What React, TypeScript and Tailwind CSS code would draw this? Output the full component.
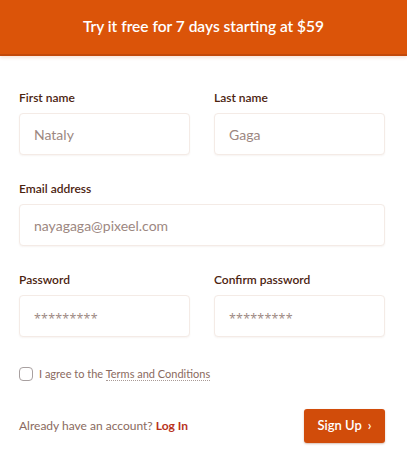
import React from "react";

function Field({ label, value, className = "", secret = false }: { label: string; value: string; className?: string; secret?: boolean }) {
  return (
    <div className={"flex flex-col " + className}>
      <label className="text-[12px] leading-[18px] font-semibold text-[#4b230f]">{label}</label>
      <div className="mt-[6px] h-[42px] rounded-[4px] border border-[#f4ebe6] bg-white shadow-[0_1px_2px_rgba(120,60,30,0.06)] flex items-center pl-[14px] text-[14px] text-[#9c8781]">
        {secret ? (
          <span className="text-[12.5px] translate-y-[3px] tracking-[0.2px]" style={{ fontFamily: '"Open Sans", sans-serif' }}>{value}</span>
        ) : (
          value
        )}
      </div>
    </div>
  );
}

export default function App() {
  return (
    <div className="w-[407px] h-[472px] bg-white" style={{ fontFamily: 'Lato, sans-serif' }}>
      <div className="h-[56px] bg-[#db5409] border-b-2 border-[#c2490a] shadow-[0_2px_3px_rgba(200,80,20,0.15)] flex items-center justify-center">
        <span className="text-white text-[15.5px] font-semibold">Try it free for 7 days starting at $59</span>
      </div>
      <div className="pl-[19px] pr-[22px] pt-[33px]">
        <div className="grid grid-cols-2 gap-x-[24px]">
          <Field label="First name" value="Nataly" />
          <Field label="Last name" value="Gaga" />
        </div>
        <Field label="Email address" value="nayagaga@pixeel.com" className="mt-[25px]" />
        <div className="grid grid-cols-2 gap-x-[24px] mt-[25px]">
          <Field label="Password" value="*********" secret />
          <Field label="Confirm password" value="*********" secret />
        </div>
        <div className="flex items-center mt-[29px] h-[16px]">
          <div className="w-[14px] h-[14px] rounded-[4px] border border-[#a8a0a0] bg-white" />
          <span className="ml-[6px] text-[11px] text-[#8a6a60]">
            I agree to the{" "}
            <span className="border-b border-dotted border-[#a89a96]">Terms and Conditions</span>
          </span>
        </div>
        <div className="flex items-center justify-between mt-[27px]">
          <span className="text-[12px] text-[#8a6a60]">
            Already have an account? <span className="font-bold text-[#b8321a]">Log In</span>
          </span>
          <button className="w-[81px] h-[34px] rounded-[3px] bg-[#d14c0a] text-white text-[13px] font-semibold flex items-center justify-center shadow-[0_1px_2px_rgba(120,40,0,0.3)]">
            Sign Up <span className="ml-[6px] text-[13px]">›</span>
          </button>
        </div>
      </div>
    </div>
  );
}
